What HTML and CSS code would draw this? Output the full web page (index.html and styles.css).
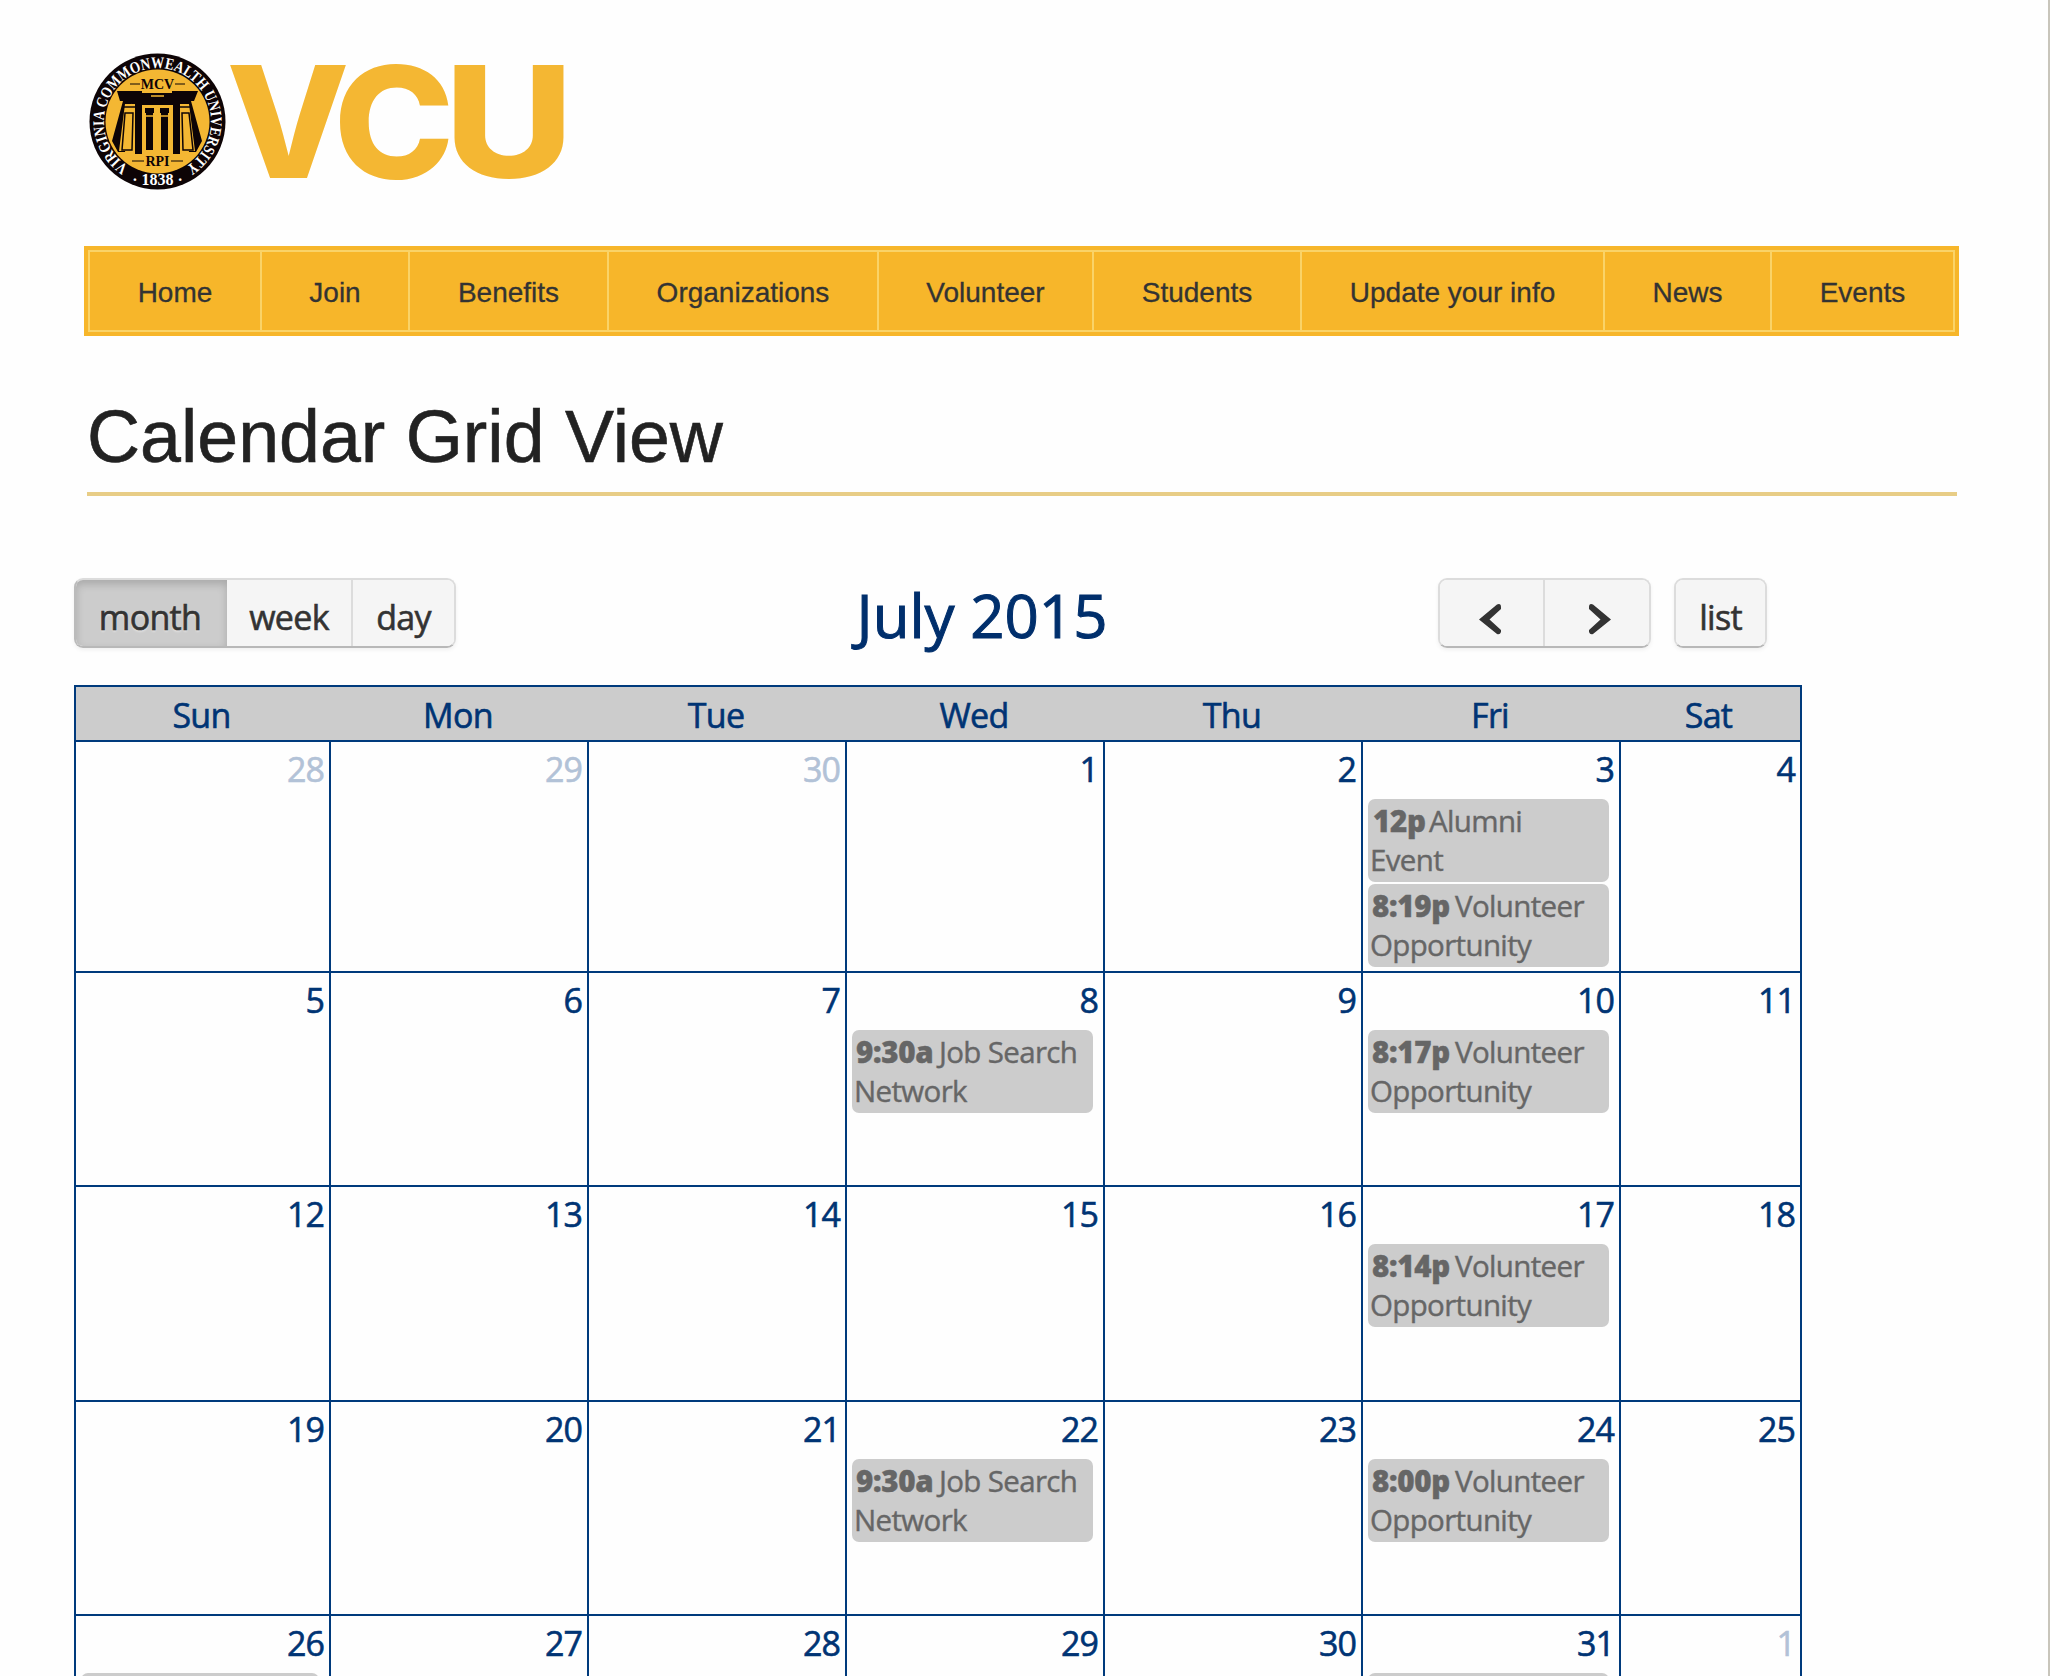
FILE: index.html
```html
<!DOCTYPE html>
<html lang="en">
<head>
<meta charset="utf-8">
<title>Calendar Grid View</title>
<link rel="stylesheet" href="styles.css">
</head>
<body>
<div class="page">
  <header class="brand">
    <svg class="logo" width="490" height="140" viewBox="0 0 490 140" role="img" aria-label="VCU">
      <defs>
        <path id="ring" d="M39.500 113.500A53.500 53.500 0 1 1 97.500 113.500"/>
      </defs>
      <circle cx="68.500" cy="68.500" r="68" fill="#0d0406"/>
      <circle cx="68.500" cy="68.500" r="52" fill="#f4b733"/>
      <text class="seal-ring"><textPath href="#ring" textLength="275" lengthAdjust="spacingAndGlyphs">VIRGINIA COMMONWEALTH UNIVERSITY</textPath></text>
      <text class="seal-year" x="68.500" y="132" text-anchor="middle">· 1838 ·</text>
      <g fill="#0d0406">
        <path d="M28 38H53V40H83V38H109L105 48H102L113 88L107 99H100L93 50H43L36 99H29L23 88L34 48H31Z"/>
        <path d="M46 49H53V101H46Z"/>
        <path d="M84 49H91V101H84Z"/>
        <path d="M43 46H94V52H43Z"/>
        <path d="M56 55H65V60H64V97H57V60H56Z"/>
        <path d="M71 55H80V60H79V97H72V60H71Z"/>
      </g>
      <path d="M36 51H46V98H30ZM91 51H100L106 98H91Z" fill="#f4b733"/>
      <path d="M36 60H44L43 97H33ZM93 60H100L104 97H94ZM35 54H46M91 54H101" fill="none" stroke="#0d0406" stroke-width="1.500"/>
      <path d="M55 63H65M71 63H82M62 43H75" stroke="#f4b733" stroke-width="1.500"/>
      <path d="M41 31H51M86 31H96M43 108H55M82 108H94" stroke="#0d0406" stroke-width="1"/>
      <text class="seal-inner" x="68.500" y="36" text-anchor="middle">MCV</text>
      <text class="seal-inner" x="68.500" y="113" text-anchor="middle">RPI</text>
      <g class="wordmark">
        <text x="137.500" y="125" textLength="123" lengthAdjust="spacingAndGlyphs">V</text>
        <text x="244.500" y="125" textLength="121" lengthAdjust="spacingAndGlyphs">C</text>
        <text x="355.500" y="125" textLength="129" lengthAdjust="spacingAndGlyphs">U</text>
      </g>
    </svg>
  </header>

  <nav class="menu">
    <ul class="menu-list">
      <li>Home</li><li>Join</li><li>Benefits</li><li>Organizations</li><li>Volunteer</li><li>Students</li><li>Update your info</li><li>News</li><li>Events</li>
    </ul>
  </nav>

  <h1 class="title">Calendar Grid View</h1>

  <main class="calendar">
    <div class="toolbar">
      <div class="group views">
        <button class="btn month active">month</button><button class="btn week">week</button><button class="btn day-view">day</button>
      </div>
      <h2 class="period">July 2015</h2>
      <div class="right-tools">
        <div class="group arrows">
          <button class="btn prev" aria-label="Previous"><svg width="24" height="32" viewBox="0 0 24 32"><path d="M1 16.500L19 1.500Q23 0 23 4V6L11.500 16.500L23 27V29Q22 32 19 31Z"/></svg></button><button class="btn next" aria-label="Next"><svg width="24" height="32" viewBox="0 0 24 32"><path d="M23 16.500L5 1.500Q1 0 1 4V6L12.500 16.500L1 27V29Q2 32 5 31Z"/></svg></button>
        </div>
        <div class="group"><button class="btn list">list</button></div>
      </div>
    </div>

    <div class="grid">
      <div class="row head"><div>Sun</div><div>Mon</div><div>Tue</div><div>Wed</div><div>Thu</div><div>Fri</div><div>Sat</div></div>
      <div class="row first">
        <div class="cell other"><span class="num">28</span></div>
        <div class="cell other"><span class="num">29</span></div>
        <div class="cell other"><span class="num">30</span></div>
        <div class="cell"><span class="num">1</span></div>
        <div class="cell"><span class="num">2</span></div>
        <div class="cell"><span class="num">3</span>
          <div class="event"><b class="t12">12p</b>Alumni<br>Event</div>
          <div class="event"><b>8:19p</b>Volunteer<br>Opportunity</div></div>
        <div class="cell"><span class="num">4</span></div>
      </div>
      <div class="row">
        <div class="cell"><span class="num">5</span></div>
        <div class="cell"><span class="num">6</span></div>
        <div class="cell"><span class="num">7</span></div>
        <div class="cell"><span class="num">8</span><div class="event"><b>9:30a</b>Job Search<br>Network</div></div>
        <div class="cell"><span class="num">9</span></div>
        <div class="cell"><span class="num">10</span><div class="event"><b>8:17p</b>Volunteer<br>Opportunity</div></div>
        <div class="cell"><span class="num">11</span></div>
      </div>
      <div class="row">
        <div class="cell"><span class="num">12</span></div>
        <div class="cell"><span class="num">13</span></div>
        <div class="cell"><span class="num">14</span></div>
        <div class="cell"><span class="num">15</span></div>
        <div class="cell"><span class="num">16</span></div>
        <div class="cell"><span class="num">17</span><div class="event"><b>8:14p</b>Volunteer<br>Opportunity</div></div>
        <div class="cell"><span class="num">18</span></div>
      </div>
      <div class="row">
        <div class="cell"><span class="num">19</span></div>
        <div class="cell"><span class="num">20</span></div>
        <div class="cell"><span class="num">21</span></div>
        <div class="cell"><span class="num">22</span><div class="event"><b>9:30a</b>Job Search<br>Network</div></div>
        <div class="cell"><span class="num">23</span></div>
        <div class="cell"><span class="num">24</span><div class="event"><b>8:00p</b>Volunteer<br>Opportunity</div></div>
        <div class="cell"><span class="num">25</span></div>
      </div>
      <div class="row">
        <div class="cell"><span class="num">26</span><div class="event"></div></div>
        <div class="cell"><span class="num">27</span></div>
        <div class="cell"><span class="num">28</span></div>
        <div class="cell"><span class="num">29</span></div>
        <div class="cell"><span class="num">30</span></div>
        <div class="cell"><span class="num">31</span><div class="event"></div></div>
        <div class="cell other"><span class="num">1</span></div>
      </div>
    </div>
  </main>
</div>
</body>
</html>
```

FILE: styles.css
```css
* { box-sizing: border-box; }
body { margin: 0; background: #fefefe; }

.page {
  width: 2050px;
  height: 1676px;
  overflow: hidden;
  border-right: 2px solid #c8c5bb;
  font-family: "Liberation Sans", Arial, sans-serif;
}

/* Logo */
.brand { height: 246px; padding: 53px 0 0 89px; }
.logo { display: block; overflow: visible; }
.seal-ring { font: bold 16px "Liberation Serif", serif; fill: #fff; }
.seal-year { font: bold 16px "Liberation Serif", serif; fill: #fff; }
.seal-inner { font: bold 14px "Liberation Serif", serif; fill: #0d0406; }
.wordmark { font: 800 155px Inter, sans-serif; fill: #f4b733; }

/* Navigation */
.menu {
  width: 1875px;
  height: 90px;
  margin-left: 84px;
  padding: 4px;
  background: #f7b62a;
}
.menu-list {
  display: grid;
  grid-template-columns: 172px 148px 199px 270px 215px 208px 303px 167px 1fr;
  height: 82px;
  margin: 0;
  padding: 0;
  border: 2px solid #fad368;
  list-style: none;
}
.menu-list li {
  display: flex;
  align-items: center;
  justify-content: center;
  padding-top: 3px;
  border-right: 2px solid #fad368;
  color: #333;
  font-size: 28px;
  white-space: nowrap;
  -webkit-text-stroke: .3px #333;
}
.menu-list li:last-child { border-right: 0; }

.title {
  width: 1870px;
  height: 160px;
  margin: 0 0 0 87px;
  padding-top: 61px;
  border-bottom: 4px solid #e8cd86;
  color: #222;
  font-size: 73.500px;
  font-weight: 400;
  line-height: 80px;
  -webkit-text-stroke: .6px #222;
}

/* Calendar */
.calendar {
  width: 1728px;
  margin: 82px 0 0 74px;
  font-family: "Open Sans", "Noto Sans", sans-serif;
  -webkit-text-stroke-width: .6px;
}
.toolbar {
  display: grid;
  grid-template-columns: 382px 1fr 364px;
  height: 107px;
}
.group {
  display: flex;
  height: 70px;
  overflow: hidden;
  border: 2px solid #dcdcdc;
  border-bottom-color: #b8b8b8;
  border-radius: 9px;
  box-shadow: 0 2px 4px rgba(0, 0, 0, .06);
}
.btn {
  display: flex;
  flex: 1;
  align-items: center;
  justify-content: center;
  height: 66px;
  margin: 0;
  padding: 8px 0 0;
  border: 0;
  border-right: 2px solid #dcdcdc;
  background: #f5f5f5;
  color: #333;
  font: 34px "Open Sans", sans-serif;
  letter-spacing: -.700px;
  text-shadow: 0 2px 2px rgba(255, 255, 255, .4);
}
.btn:last-child { border-right: 0; }
.btn svg { fill: #333; }
.btn.prev { padding: 12px 4px 0 0; }
.btn.next { padding: 12px 0 0 5px; }
.views { width: 382px; border-left-color: #bbb; }
.views .btn { flex: none; }
.views .month { width: 151px; border-right: 0; padding-right: 3px; }
.views .week { width: 126px; }
.views .day-view { width: 101px; }
.btn.active {
  background: #ccc;
  box-shadow: inset 0 4px 8px rgba(0, 0, 0, .18);
}
.period {
  margin: 0;
  padding: 0 0 0 70px;
  justify-self: center;
  color: #002f6c;
  font-size: 60px;
  font-weight: 400;
  letter-spacing: 0;
  line-height: 75px;
  white-space: nowrap;
  -webkit-text-stroke-width: 1px;
}
.right-tools { display: flex; gap: 24px; }
.arrows { width: 213px; margin-right: -1px; }
.list { width: 89px; flex: none; }

.grid { border: 2px solid #003a7c; border-bottom: 0; }
.row {
  display: grid;
  grid-template-columns: 255px 258px 258px 258px 258px 258px 1fr;
  height: 214.250px;
}
.row.first { height: 231px; }
.row.head {
  height: 53px;
  background: #ccc;
  color: #003474;
  font-size: 34px;
  letter-spacing: -.700px;
  line-height: 57px;
  text-align: center;
}
.row.head div { padding-right: 4px; }
.cell {
  border-top: 2px solid #003a7c;
  border-right: 2px solid #003a7c;
  padding: 2px 10px 0 5px;
}
.cell:last-child { border-right: 0; }
.num {
  display: block;
  height: 55px;
  margin-right: -5px;
  color: #003474;
  font-size: 34px;
  letter-spacing: -.900px;
  line-height: 51px;
  text-align: right;
}
.other .num { color: #b2c2d7; }
.event {
  height: 83px;
  margin-bottom: 2px;
  padding: 2px 0 0 2px;
  border-radius: 7px;
  background: #ccc;
  color: #666;
  font-size: 29.500px;
  letter-spacing: -.650px;
  line-height: 39px;
  white-space: nowrap;
  -webkit-text-stroke-width: .4px;
}
.event b {
  display: inline-block;
  width: 85px;
  padding-left: 2px;
  font-weight: 800;
  letter-spacing: -.300px;
}
.event .t12 { width: 59px; padding-left: 3px; }
```
